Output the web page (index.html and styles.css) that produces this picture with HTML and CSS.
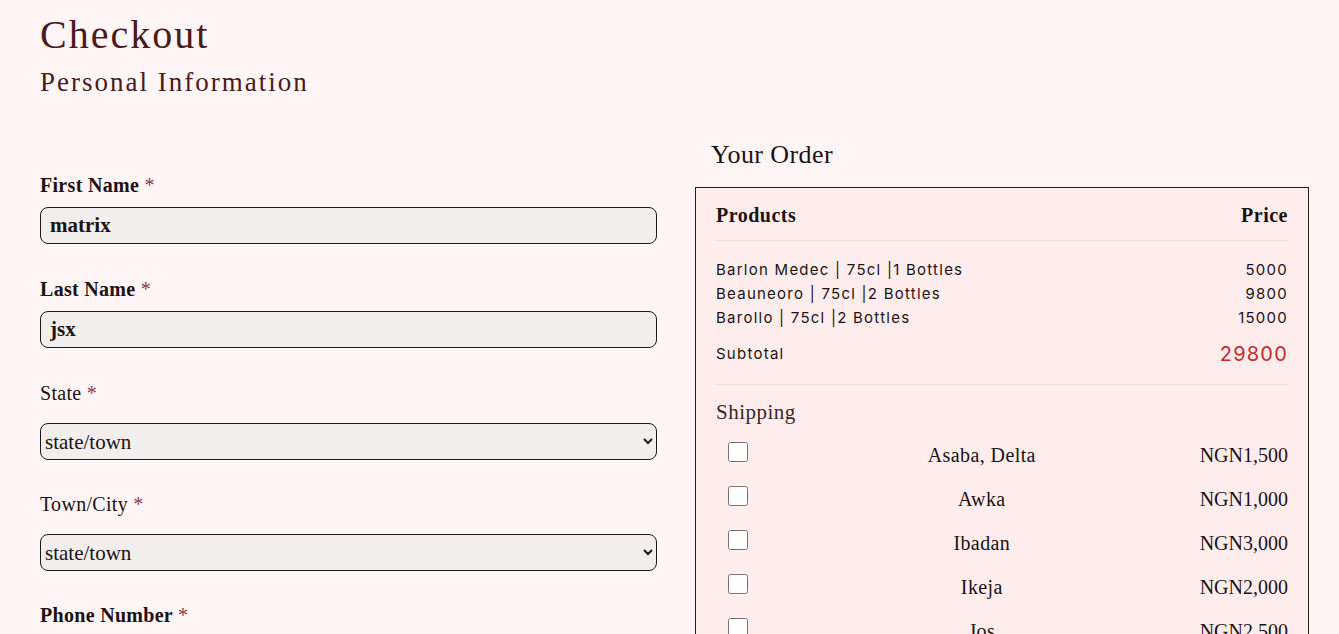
FILE: index.html
```html
<!DOCTYPE html>
<html>
<head>
<meta charset="utf-8">
<link rel="stylesheet" href="styles.css">
</head>
<body>
<div class="page">
  <header class="head">
    <h1 class="title">Checkout</h1>
    <h2 class="subtitle">Personal Information</h2>
  </header>
  <div class="columns">
    <form class="form">
      <div class="field">
        <label class="label">First Name <span class="req">*</span></label>
        <input class="input" type="text" value="matrix">
      </div>
      <div class="field">
        <label class="label">Last Name <span class="req">*</span></label>
        <input class="input" type="text" value="jsx">
      </div>
      <div class="field field-select">
        <label class="label">State <span class="req">*</span></label>
        <select class="select"><option>state/town</option></select>
      </div>
      <div class="field field-select">
        <label class="label">Town/City <span class="req">*</span></label>
        <select class="select"><option>state/town</option></select>
      </div>
      <div class="field">
        <label class="label">Phone Number <span class="req">*</span></label>
        <input class="input" type="text" value="">
      </div>
    </form>
    <section class="order">
      <h3 class="order-title">Your Order</h3>
      <div class="order-box">
        <div class="row head-row">
          <span>Products</span><span>Price</span>
        </div>
        <div class="items">
          <div class="row item"><span>Barlon Medec | 75cl |1 Bottles</span><span>5000</span></div>
          <div class="row item"><span>Beauneoro | 75cl |2 Bottles</span><span>9800</span></div>
          <div class="row item"><span>Barollo | 75cl |2 Bottles</span><span>15000</span></div>
          <div class="row subtotal"><span>Subtotal</span><span class="total">29800</span></div>
        </div>
        <div class="shipping">
          <div class="ship-title">Shipping</div>
          <div class="ship-row"><input type="checkbox" class="check"><span class="ship-name">Asaba, Delta</span><span class="ship-price">NGN1,500</span></div>
          <div class="ship-row"><input type="checkbox" class="check"><span class="ship-name">Awka</span><span class="ship-price">NGN1,000</span></div>
          <div class="ship-row"><input type="checkbox" class="check"><span class="ship-name">Ibadan</span><span class="ship-price">NGN3,000</span></div>
          <div class="ship-row"><input type="checkbox" class="check"><span class="ship-name">Ikeja</span><span class="ship-price">NGN2,000</span></div>
          <div class="ship-row"><input type="checkbox" class="check"><span class="ship-name">Jos</span><span class="ship-price">NGN2,500</span></div>
        </div>
      </div>
    </section>
  </div>
</div>
</body>
</html>
```
FILE: styles.css
```css
html, body {
  margin: 0;
  padding: 0;
  background: #fff5f6;
}
body {
  font-family: "Liberation Serif", "Times New Roman", serif;
  color: #1c1212;
}
.page {
  padding: 13px 30px 0 40px;
}
.title {
  margin: 0;
  font-size: 40px;
  font-weight: 400;
  letter-spacing: 2px;
  color: #4a1a1c;
  line-height: 44px;
}
.subtitle {
  margin: 9px 0 0;
  font-size: 27px;
  font-weight: 400;
  letter-spacing: 2px;
  color: #4a1a1c;
  line-height: 32px;
}
.columns {
  display: flex;
  gap: 39px;
  margin-top: 41px;
}
.form {
  width: 616px;
  padding-top: 35px;
}
.field {
  display: flex;
  flex-direction: column;
  margin-bottom: 34px;
}
.label {
  font-size: 20px;
  font-weight: 700;
  letter-spacing: 0.3px;
  line-height: 22px;
  margin-bottom: 11px;
}
.field-select .label {
  font-weight: 400;
  margin-bottom: 19px;
}
.field-select {
  margin-bottom: 33px;
}
.req {
  color: #8c3a3e;
  font-weight: 400;
}
.input, .select {
  box-sizing: border-box;
  width: 617px;
  height: 37px;
  border: 1px solid #1a1a1a;
  border-radius: 8px;
  background: #f1eeed;
  font-family: "Liberation Serif", serif;
  font-size: 21px;
  font-weight: 700;
  padding: 0 9px;
  color: #1c1212;
}
.select {
  font-weight: 400;
  padding: 0;
}
.order {
  width: 614px;
}
.order-title {
  margin: 0 0 16px 16px;
  font-size: 26px;
  font-weight: 400;
  letter-spacing: 0.4px;
  line-height: 32px;
}
.order-box {
  box-sizing: border-box;
  border: 1px solid #2a1a1a;
  background: #ffedee;
  padding: 14px 20px 20px;
  min-height: 460px;
}
.row {
  display: flex;
  justify-content: space-between;
}
.head-row {
  font-size: 20px;
  font-weight: 700;
  letter-spacing: 0.5px;
  line-height: 26px;
  padding-bottom: 12px;
  border-bottom: 1px solid #f5dcde;
}
.items {
  font-family: Inter, "Noto Sans", sans-serif;
  font-size: 15px;
  letter-spacing: 1.25px;
  padding: 17px 0 18px;
  border-bottom: 1px solid #f5dcde;
}
.item {
  line-height: 24px;
}
.subtotal {
  margin-top: 12px;
  align-items: center;
  line-height: 24px;
}
.total {
  color: #c42a2f;
  font-size: 20px;
  letter-spacing: 1.2px;
}
.shipping {
  padding-top: 15px;
}
.ship-title {
  font-size: 21px;
  letter-spacing: 0.5px;
  color: #3a2626;
  line-height: 24px;
  margin-bottom: 9px;
}
.ship-row {
  display: grid;
  grid-template-columns: 48px 1fr auto;
  align-items: center;
  height: 44px;
  font-size: 20px;
  letter-spacing: 0.4px;
}
.check {
  margin: 0 0 6px 12px;
  width: 20px;
  height: 20px;
}
.ship-name {
  text-align: center;
}
.ship-price {
  text-align: right;
  letter-spacing: 0;
}
```
